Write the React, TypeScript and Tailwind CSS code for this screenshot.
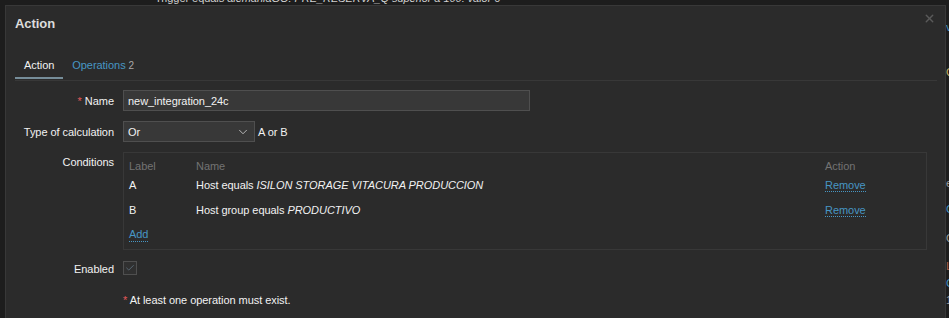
import { ChevronDown, X, Check } from 'lucide-react';

const conditions = [
  { label: 'A', prefix: 'Host equals ', value: 'ISILON STORAGE VITACURA PRODUCCION' },
  { label: 'B', prefix: 'Host group equals ', value: 'PRODUCTIVO' },
];

function FormRow({ label, required, top, labelPad, children }: { label: string; required?: boolean; top?: boolean; labelPad?: string; children: React.ReactNode }) {
  return (
    <div className={`flex gap-[9px] ${top ? 'items-start' : 'items-center'}`}>
      <div className={`w-[99px] shrink-0 whitespace-nowrap text-right text-[#f2f2f2] ${labelPad ?? ''}`}>
        {required && <span className="text-[#e45959]">* </span>}
        {label}
      </div>
      {children}
    </div>
  );
}

export default function App() {
  return (
    <div className="relative h-[318px] w-[949px] overflow-hidden bg-[#1d1d1d] font-['Liberation_Sans',Arial,sans-serif] text-[11px] leading-[14px] tracking-[-0.05px]">
      {/* page underneath the dialog */}
      <div className="absolute left-[155px] top-[-9px] whitespace-nowrap text-[#d0d0d0]">
        Trigger equals <i>alemaniaGO: PRE_RESERVA_Q superior a 100: valor 6</i>
      </div>
      <div className="absolute left-[946px] top-[20px] text-[#4796c4]">v</div>
      <div className="absolute left-[946px] top-[65px] text-[#c8b26a]">Q</div>
      <div className="absolute left-[946px] top-[176px] text-[#a0a0a0]">e</div>
      <div className="absolute left-[946px] top-[202px] text-[#4796c4]">C</div>
      <div className="absolute left-[946px] top-[231px] text-[#a0a0a0]">Q</div>
      <div className="absolute left-[946px] top-[259px] text-[#b0604a]">L</div>
      <div className="absolute left-[946px] top-[276px] text-[#4796c4]">C</div>
      <div className="absolute left-[946px] top-[293px] text-[#a0a0a0]">1</div>

      {/* dialog */}
      <div className="absolute left-[5px] top-[5px] h-[330px] w-[941px] border border-[#383838] bg-[#2b2b2b]">
        <button className="absolute right-[9px] top-[6px] text-[#5a5a5a]">
          <X size={13} strokeWidth={2.5} />
        </button>

        <div className="h-[52px] px-[9px] pt-[9px]">
          <h4 className="text-[13px] font-bold leading-[18px] text-[#dcdcdc]">Action</h4>
        </div>

        <div className="ml-[9px] mr-[8px] flex border-b border-[#383838] pb-[1px]">
          <div className="border-b-2 border-[#768d99] px-[9px] pb-[5px] text-[#f2f2f2]">Action</div>
          <div className="px-[9px] pb-[5px] text-[#4796c4]">
            Operations <span className="text-[10px] text-[#a8a8a8]">2</span>
          </div>
        </div>

        <div className="flex flex-col gap-[10px] pl-[9px] pt-[9px]">
          <FormRow label="Name" required>
            <div className="flex h-[21px] w-[407px] items-center border border-[#4f4f4f] bg-[#383838] px-[4px] text-[#f2f2f2]">
              new_integration_24c
            </div>
          </FormRow>

          <FormRow label="Type of calculation">
            <div className="flex items-center gap-[3px]">
              <div className="flex h-[21px] w-[132px] items-center justify-between border border-[#4f4f4f] bg-[#383838] pl-[4px] pr-[4px] text-[#f2f2f2]">
                <span>Or</span>
                <ChevronDown size={14} strokeWidth={1.5} className="text-[#c8c8c8]" />
              </div>
              <span className="text-[#f2f2f2]">A or B</span>
            </div>
          </FormRow>

          <FormRow label="Conditions" top labelPad="pt-[3px]">
            <div className="w-[804px] border border-[#383838] px-[5px] pb-[3px] pt-[5px]">
              <div className="flex h-[16px] items-center text-[#737373]">
                <div className="w-[67px]">Label</div>
                <div className="flex-1">Name</div>
                <div className="w-[96px]">Action</div>
              </div>
              {conditions.map((c, i) => (
                <div key={c.label} className={`flex items-center text-[#f2f2f2] ${i === 0 ? 'h-[22px]' : 'mt-[2px] h-[24px]'}`}>
                  <div className="w-[67px]">{c.label}</div>
                  <div className="flex-1">
                    {c.prefix}
                    <i>{c.value}</i>
                  </div>
                  <div className="w-[96px]">
                    <span className="border-b border-dotted border-[#4796c4] text-[#4796c4]">Remove</span>
                  </div>
                </div>
              ))}
              <div className="flex h-[24px] items-center">
                <span className="border-b border-dotted border-[#4796c4] text-[#4796c4]">Add</span>
              </div>
            </div>
          </FormRow>

          <FormRow label="Enabled" top labelPad="pt-[2px]">
            <div className="mt-[1px] flex h-[14px] w-[14px] items-center justify-center border border-[#4f4f4f] bg-[#303030]">
              <Check size={10} strokeWidth={2} className="text-[#5f7180]" />
            </div>
          </FormRow>

          <div className="mt-[7px] pl-[108px] text-[#f2f2f2]">
            <span className="text-[#e45959]">*</span> At least one operation must exist.
          </div>
        </div>
      </div>
    </div>
  );
}
